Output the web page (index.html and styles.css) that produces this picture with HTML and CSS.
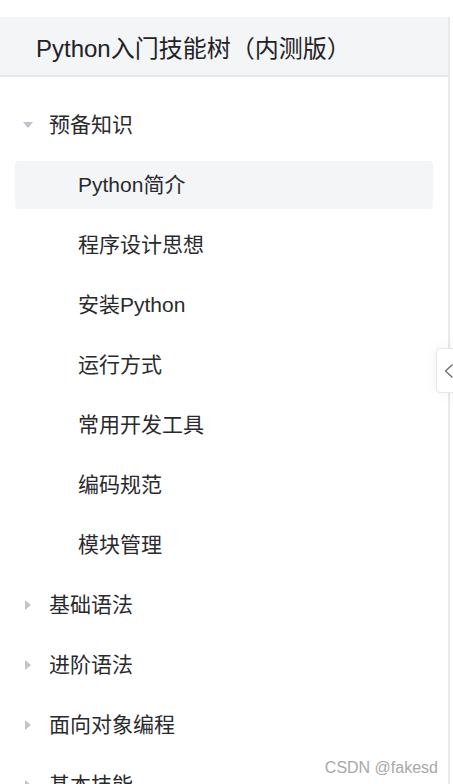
FILE: index.html
```html
<!DOCTYPE html>
<html lang="zh">
<head>
<meta charset="utf-8">
<title>Python入门技能树</title>
<link rel="stylesheet" href="styles.css">
</head>
<body>
<div class="page">
  <aside class="sidebar">
    <div class="sidebar-header">Python入门技能树（内测版）</div>
    <ul class="tree">
      <li class="row"><span class="caret down"></span><span class="label">预备知识</span></li>
      <li class="row leaf active"><span class="label">Python简介</span></li>
      <li class="row leaf"><span class="label">程序设计思想</span></li>
      <li class="row leaf"><span class="label">安装Python</span></li>
      <li class="row leaf"><span class="label">运行方式</span></li>
      <li class="row leaf"><span class="label">常用开发工具</span></li>
      <li class="row leaf"><span class="label">编码规范</span></li>
      <li class="row leaf"><span class="label">模块管理</span></li>
      <li class="row"><span class="caret right"></span><span class="label">基础语法</span></li>
      <li class="row"><span class="caret right"></span><span class="label">进阶语法</span></li>
      <li class="row"><span class="caret right"></span><span class="label">面向对象编程</span></li>
      <li class="row"><span class="caret right"></span><span class="label">基本技能</span></li>
    </ul>
    <button class="collapse-toggle" aria-label="收起">
      <svg width="10" height="16" viewBox="0 0 10 16"><polyline points="8.5,1.5 1.5,8 8.5,14.5" fill="none" stroke="#666" stroke-width="1.2"/></svg>
    </button>
  </aside>
  <div class="watermark">CSDN @fakesd</div>
</div>
</body>
</html>
```
FILE: styles.css
```css
* { box-sizing: border-box; }
html, body {
  margin: 0;
  padding: 0;
  background: #fff;
  overflow: hidden;
}
body {
  font-family: "Liberation Sans", "Noto Sans CJK SC", sans-serif;
  color: #222226;
}
.page {
  height: 784px;
  padding-top: 17px;
  position: relative;
}
.sidebar {
  position: relative;
  width: 450px;
  height: 767px;
  border-right: 2px solid #e8e9ed;
}
.sidebar-header {
  height: 60px;
  background: #f4f5f7;
  border-bottom: 2px solid #e6e7eb;
  display: flex;
  align-items: center;
  padding-left: 36px;
  font-size: 24px;
  color: #222226;
}
.tree {
  list-style: none;
  margin: 0;
  padding: 24px 15px 0 15px;
  display: flex;
  flex-direction: column;
  gap: 12px;
}
.row {
  height: 48px;
  border-radius: 4px;
  display: flex;
  align-items: center;
  padding-left: 7px;
  font-size: 21px;
  line-height: 24px;
  color: #2a2a2e;
}
.row.leaf { padding-left: 63px; }
.row.active { background: #f4f5f7; }
.caret {
  width: 12px;
  height: 12px;
  margin-right: 15px;
  display: flex;
  align-items: center;
  justify-content: center;
}
.caret::before {
  content: "";
  display: block;
  width: 0;
  height: 0;
}
.caret.down::before {
  border-left: 5px solid transparent;
  border-right: 5px solid transparent;
  border-top: 6px solid #c0c4cc;
}
.caret.right::before {
  border-top: 5px solid transparent;
  border-bottom: 5px solid transparent;
  border-left: 6px solid #c0c4cc;
}
.collapse-toggle {
  position: absolute;
  top: 331px;
  left: 436px;
  width: 24px;
  height: 45px;
  padding: 0 0 0 7px;
  margin: 0;
  background: #fff;
  border: 1px solid #e4e6eb;
  border-radius: 4px 0 0 4px;
  box-shadow: 0 0 14px rgba(0, 0, 0, 0.06);
  display: flex;
  align-items: center;
}
.watermark {
  position: absolute;
  right: 15px;
  bottom: 7px;
  font-family: "Liberation Sans", sans-serif;
  font-size: 16px;
  color: #a8a8a8;
}
```
